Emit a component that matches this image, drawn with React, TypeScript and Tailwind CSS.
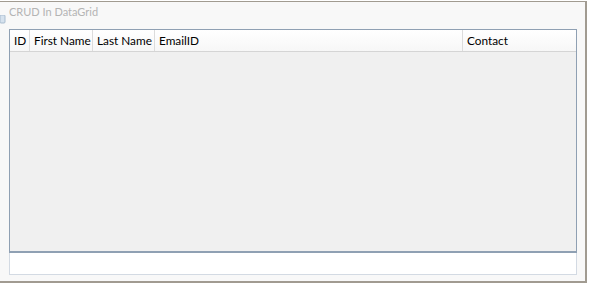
import React from "react";

const cols = [
  { label: "ID", w: 20 },
  { label: "First Name", w: 63 },
  { label: "Last Name", w: 62 },
  { label: "EmailID", w: 308 },
  { label: "Contact", w: 0 },
];

export default function App() {
  return (
    <div className="w-[590px] h-[285px] bg-white overflow-hidden" style={{ fontFamily: 'Lato, "Noto Sans", sans-serif' }}>
      <div className="mt-[1px] w-[587px] h-[282px] border-t border-r-2 border-b-2 border-[#a19b91] bg-[#f8f8f8] relative">
        <svg className="absolute left-0 top-[13px]" width="6" height="9" viewBox="0 0 6 9">
          <rect x="0" y="0" width="5" height="8" rx="1" fill="#d6e2ee" stroke="#a9bccf" strokeWidth="1" />
        </svg>
        <div className="h-[27px] pl-[9px] pt-[2px] text-[11px] leading-[16px] text-[#b4b4b4]">CRUD In DataGrid</div>
        <div className="ml-[9px] w-[568px] h-[224px] border border-b-2 border-[#8fa0b3] bg-[#f0f0f0] flex flex-col">
          <div className="h-[22px] flex bg-gradient-to-b from-white to-[#f7f7f7] border-b border-[#d5d5d5] text-[11.8px] leading-[22px] text-black">
            {cols.map((c) => (
              <div
                key={c.label}
                className={
                  c.w
                    ? "shrink-0 pl-[4px] border-r border-[#dcdcdc] whitespace-nowrap"
                    : "flex-1 pl-[4px] whitespace-nowrap"
                }
                style={c.w ? { width: c.w } : undefined}
              >
                {c.label}
              </div>
            ))}
          </div>
          <div className="flex-1" />
        </div>
        <div className="ml-[9px] w-[568px] h-[22px] bg-white border-l border-r border-b border-[#d3dae3]" />
      </div>
    </div>
  );
}
